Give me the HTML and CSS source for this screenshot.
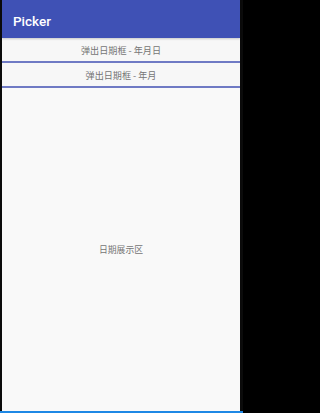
FILE: index.html
```html
<!DOCTYPE html>
<html>
<head>
<meta charset="utf-8">
<link rel="stylesheet" href="styles.css">
</head>
<body>
<div class="frame">
  <div class="screen">
    <header class="appbar"><span class="title">Picker</span></header>
    <div class="btn">弹出日期框 - 年月日</div>
    <div class="btn">弹出日期框 - 年月</div>
    <div class="display">日期展示区</div>
  </div>
</div>
</body>
</html>
```
FILE: styles.css
```css
html, body {
  margin: 0;
  padding: 0;
  height: 413px;
  overflow: hidden;
  background: #000;
}
.frame {
  width: 243px;
  height: 413px;
  box-sizing: border-box;
  padding: 0 3px 2px 2px;
  background: #0b0b0b;
  position: relative;
  display: flex;
}
.frame::after {
  content: "";
  position: absolute;
  left: 0;
  right: 0;
  bottom: 0;
  height: 2px;
  background: #1e88e5;
}
.screen {
  flex: 1;
  display: flex;
  flex-direction: column;
  background: #f9f9f9;
  font-family: "Noto Sans CJK SC", Roboto, sans-serif;
}
.appbar {
  height: 38px;
  flex: none;
  background: #3f51b5;
  display: flex;
  align-items: center;
  padding-left: 11px;
  box-shadow: 0 1px 2px rgba(0,0,0,0.2);
  position: relative;
  z-index: 1;
}
.title {
  color: #fff;
  font-family: Roboto, "Noto Sans", sans-serif;
  font-weight: 500;
  font-size: 13.5px;
  margin-top: 4px;
}
.btn {
  height: 22px;
  flex: none;
  display: flex;
  align-items: center;
  justify-content: center;
  padding-top: 1px;
  box-sizing: content-box;
  background: #f7f7f7;
  color: #757575;
  font-size: 9.1px;
  border-bottom: 2px solid #6f7ac4;
}
.display {
  flex: 1;
  display: flex;
  align-items: center;
  justify-content: center;
  color: #757575;
  font-size: 8.8px;
}
```
